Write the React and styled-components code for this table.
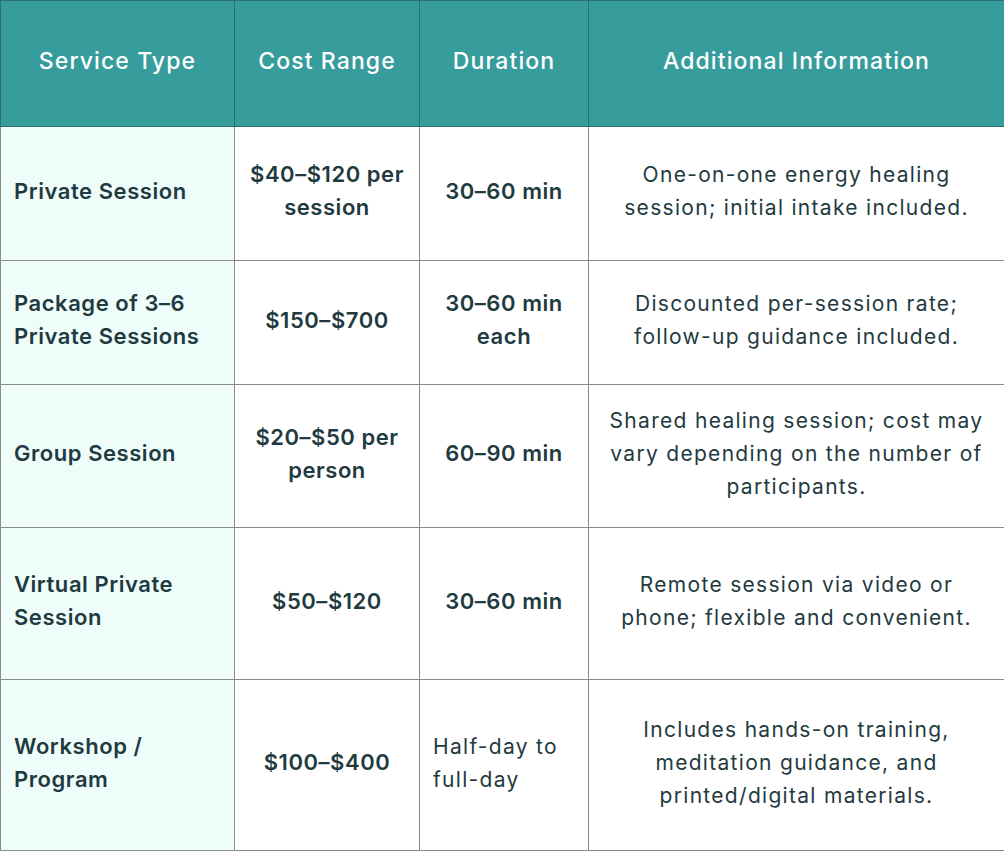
import React from "react";
import styled, { createGlobalStyle } from "styled-components";

const GlobalStyle = createGlobalStyle`
  html, body {
    margin: 0;
    padding: 0;
    background: #ffffff;
  }
  body {
    font-family: "Inter", "Noto Sans", sans-serif;
  }
`;

const TEAL = "#369c9c";
const INK = "#1f3a40";

const Table = styled.table`
  width: 1004px;
  border-collapse: collapse;
  table-layout: fixed;
  color: ${INK};
`;

const HeadCell = styled.th`
  height: 120px;
  padding: 0 8px 5px;
  background: ${TEAL};
  color: #ffffff;
  font-size: 23px;
  font-weight: 500;
  letter-spacing: 1.1px;
  text-align: center;
  border: 1px solid #2b6f70;
`;

const Row = styled.tr`
  height: ${({ $h }) => $h}px;
`;

const Cell = styled.td`
  padding: 0 ${({ $align }) => ($align === "left" ? 6 : 13)}px 5px 13px;
  font-size: ${({ $bold }) => ($bold ? 22 : 21)}px;
  line-height: 33px;
  letter-spacing: ${({ $bold }) => ($bold ? 0.55 : 1.3)}px;
  font-weight: ${({ $bold }) => ($bold ? 600 : 400)};
  text-align: ${({ $align }) => $align || "center"};
  background: ${({ $tint }) => ($tint ? "#effdfa" : "#ffffff")};
  border: 1px solid #8a8a8a;
  vertical-align: middle;
  white-space: nowrap;
`;

const Lines = ({ lines }) =>
  lines.map((l, i) => (
    <React.Fragment key={i}>
      {i > 0 && <br />}
      {l}
    </React.Fragment>
  ));

const ROWS = [
  {
    h: 134,
    type: ["Private Session"],
    cost: ["$40–$120 per", "session"],
    duration: ["30–60 min"],
    info: ["One-on-one energy healing", "session; initial intake included."],
  },
  {
    h: 124,
    type: ["Package of 3–6", "Private Sessions"],
    cost: ["$150–$700"],
    duration: ["30–60 min", "each"],
    info: ["Discounted per-session rate;", "follow-up guidance included."],
  },
  {
    h: 143,
    type: ["Group Session"],
    cost: ["$20–$50 per", "person"],
    duration: ["60–90 min"],
    info: [
      "Shared healing session; cost may",
      "vary depending on the number of",
      "participants.",
    ],
  },
  {
    h: 152,
    type: ["Virtual Private", "Session"],
    cost: ["$50–$120"],
    duration: ["30–60 min"],
    info: ["Remote session via video or", "phone; flexible and convenient."],
  },
  {
    h: 171,
    type: ["Workshop /", "Program"],
    cost: ["$100–$400"],
    duration: ["Half-day to", "full-day"],
    plainDuration: true,
    info: [
      "Includes hands-on training,",
      "meditation guidance, and",
      "printed/digital materials.",
    ],
  },
];

export default function App() {
  return (
    <>
      <GlobalStyle />
      <Table>
        <colgroup>
          <col style={{ width: 234 }} />
          <col style={{ width: 185 }} />
          <col style={{ width: 169 }} />
          <col style={{ width: 416 }} />
        </colgroup>
        <thead>
          <tr>
            <HeadCell>Service Type</HeadCell>
            <HeadCell>Cost Range</HeadCell>
            <HeadCell>Duration</HeadCell>
            <HeadCell>Additional Information</HeadCell>
          </tr>
        </thead>
        <tbody>
          {ROWS.map((r, i) => (
            <Row key={i} $h={r.h}>
              <Cell $bold $tint $align="left">
                <Lines lines={r.type} />
              </Cell>
              <Cell $bold>
                <Lines lines={r.cost} />
              </Cell>
              {r.plainDuration ? (
                <Cell $align="left">
                  <Lines lines={r.duration} />
                </Cell>
              ) : (
                <Cell $bold>
                  <Lines lines={r.duration} />
                </Cell>
              )}
              <Cell>
                <Lines lines={r.info} />
              </Cell>
            </Row>
          ))}
        </tbody>
      </Table>
    </>
  );
}
